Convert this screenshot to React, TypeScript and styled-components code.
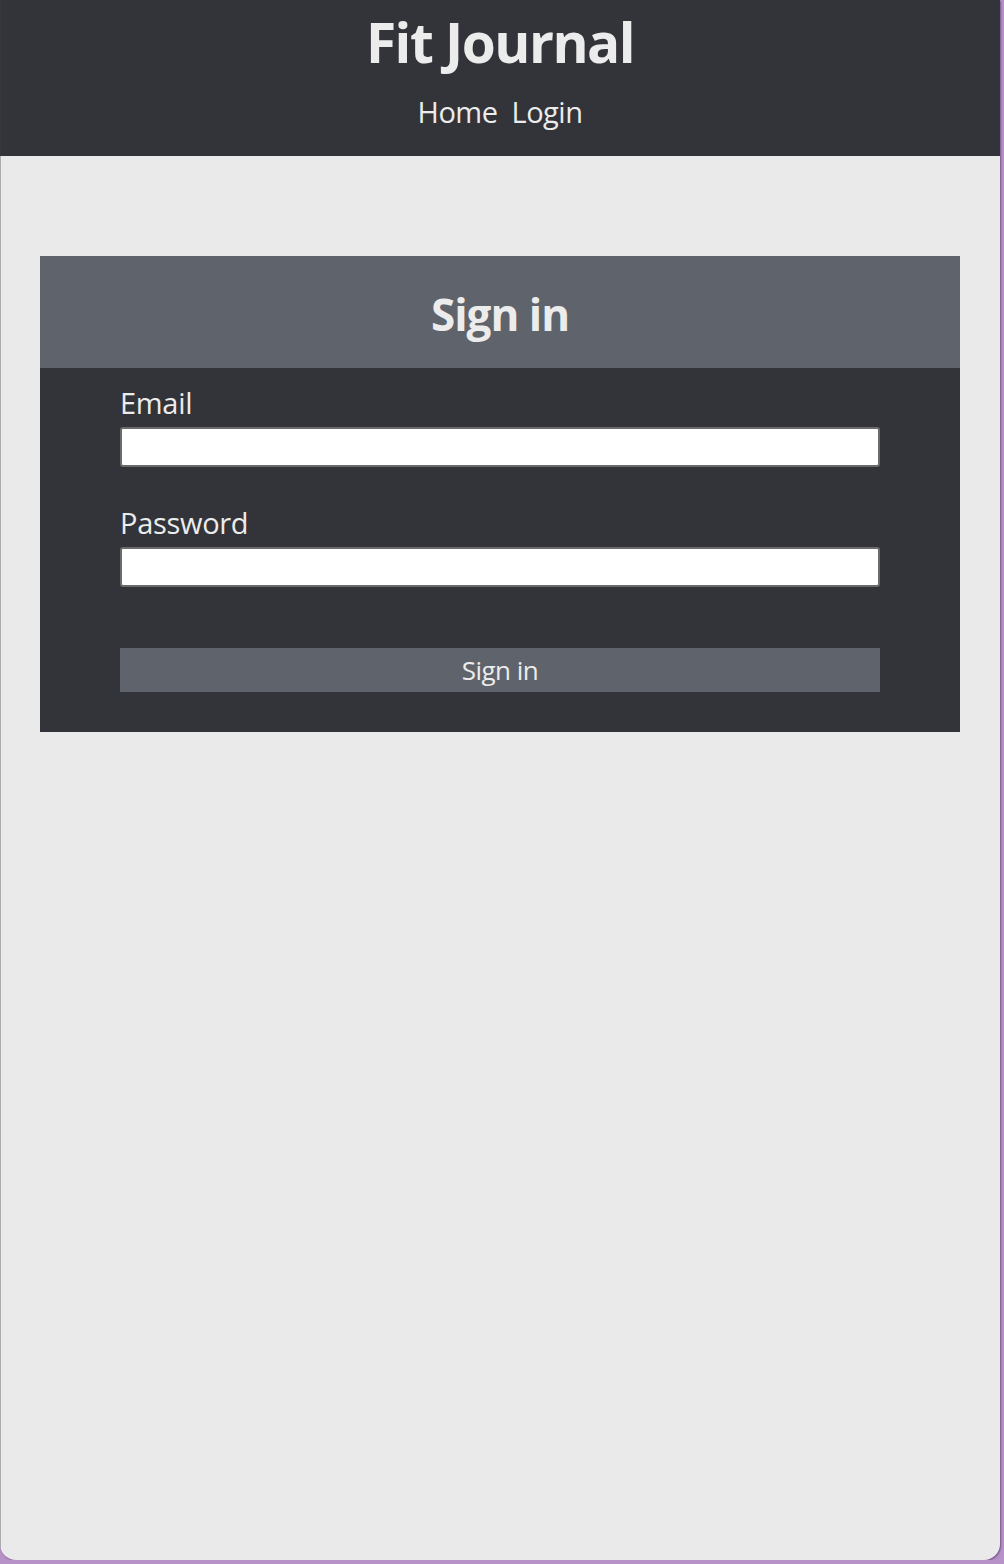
import React from "react";
import styled, { createGlobalStyle } from "styled-components";

const Global = createGlobalStyle`
  html, body { margin: 0; padding: 0; }
  body {
    background: #b792c9;
    font-family: "Open Sans", "Noto Sans", sans-serif;
    color: #ececec;
  }
  * { box-sizing: border-box; }
`;

const Window = styled.div`
  position: relative;
  width: 1000px;
  height: 1560px;
  background: #eaeaea;
  border-radius: 0 0 16px 16px;
  overflow: hidden;
  box-shadow: 1px 1px 2px rgba(80, 40, 100, 0.6);

  &::before {
    content: "";
    position: absolute;
    left: 0;
    top: 0;
    bottom: 0;
    width: 1px;
    background: rgba(60, 60, 66, 0.35);
  }
`;

const Header = styled.header`
  height: 156px;
  background: #333439;
  display: flex;
  flex-direction: column;
  align-items: center;
  padding-top: 6px;
`;

const Title = styled.h1`
  margin: 0;
  font-size: 55px;
  line-height: 72px;
  font-weight: 700;
  letter-spacing: -1.5px;
  color: #ececec;
`;

const Nav = styled.nav`
  display: flex;
  gap: 14px;
  margin-top: 14px;
`;

const NavLink = styled.a`
  font-size: 29px;
  line-height: 40px;
  color: #ececec;
  text-decoration: none;
  letter-spacing: -0.5px;
`;

const Main = styled.main`
  padding: 100px 40px;
`;

const Card = styled.section`
  background: #333439;
`;

const CardHead = styled.div`
  height: 112px;
  background: #5f636b;
  display: flex;
  align-items: center;
  justify-content: center;
`;

const CardTitle = styled.h2`
  margin: 0;
  font-size: 44px;
  font-weight: 700;
  letter-spacing: -1px;
  color: #ececec;
  padding-top: 4px;
`;

const Form = styled.form`
  padding: 19px 80px 40px;
  display: flex;
  flex-direction: column;
`;

const Field = styled.div<{ $gap?: number }>`
  display: flex;
  flex-direction: column;
  margin-bottom: ${(p) => p.$gap ?? 40}px;
`;

const Label = styled.label`
  font-size: 29px;
  line-height: 40px;
  color: #ececec;
  letter-spacing: -0.3px;
  margin-top: -4px;
  padding-bottom: 4px;
`;

const Input = styled.input`
  height: 40px;
  width: 100%;
  border: 2px solid #6b6b6b;
  border-radius: 3px;
  background: #fff;
  outline: none;
`;

const Button = styled.button`
  height: 44px;
  width: 100%;
  border: none;
  background: #5f636b;
  color: #ececec;
  font-family: inherit;
  font-size: 26px;
  letter-spacing: -0.5px;
  padding: 0;
`;

export default function App() {
  return (
    <>
      <Global />
      <Window>
        <Header>
          <Title>Fit Journal</Title>
          <Nav>
            <NavLink href="#">Home</NavLink>
            <NavLink href="#">Login</NavLink>
          </Nav>
        </Header>
        <Main>
          <Card>
            <CardHead>
              <CardTitle>Sign in</CardTitle>
            </CardHead>
            <Form onSubmit={(e) => e.preventDefault()}>
              <Field>
                <Label>Email</Label>
                <Input type="email" />
              </Field>
              <Field $gap={61}>
                <Label>Password</Label>
                <Input type="password" />
              </Field>
              <Button type="submit">Sign in</Button>
            </Form>
          </Card>
        </Main>
      </Window>
    </>
  );
}
